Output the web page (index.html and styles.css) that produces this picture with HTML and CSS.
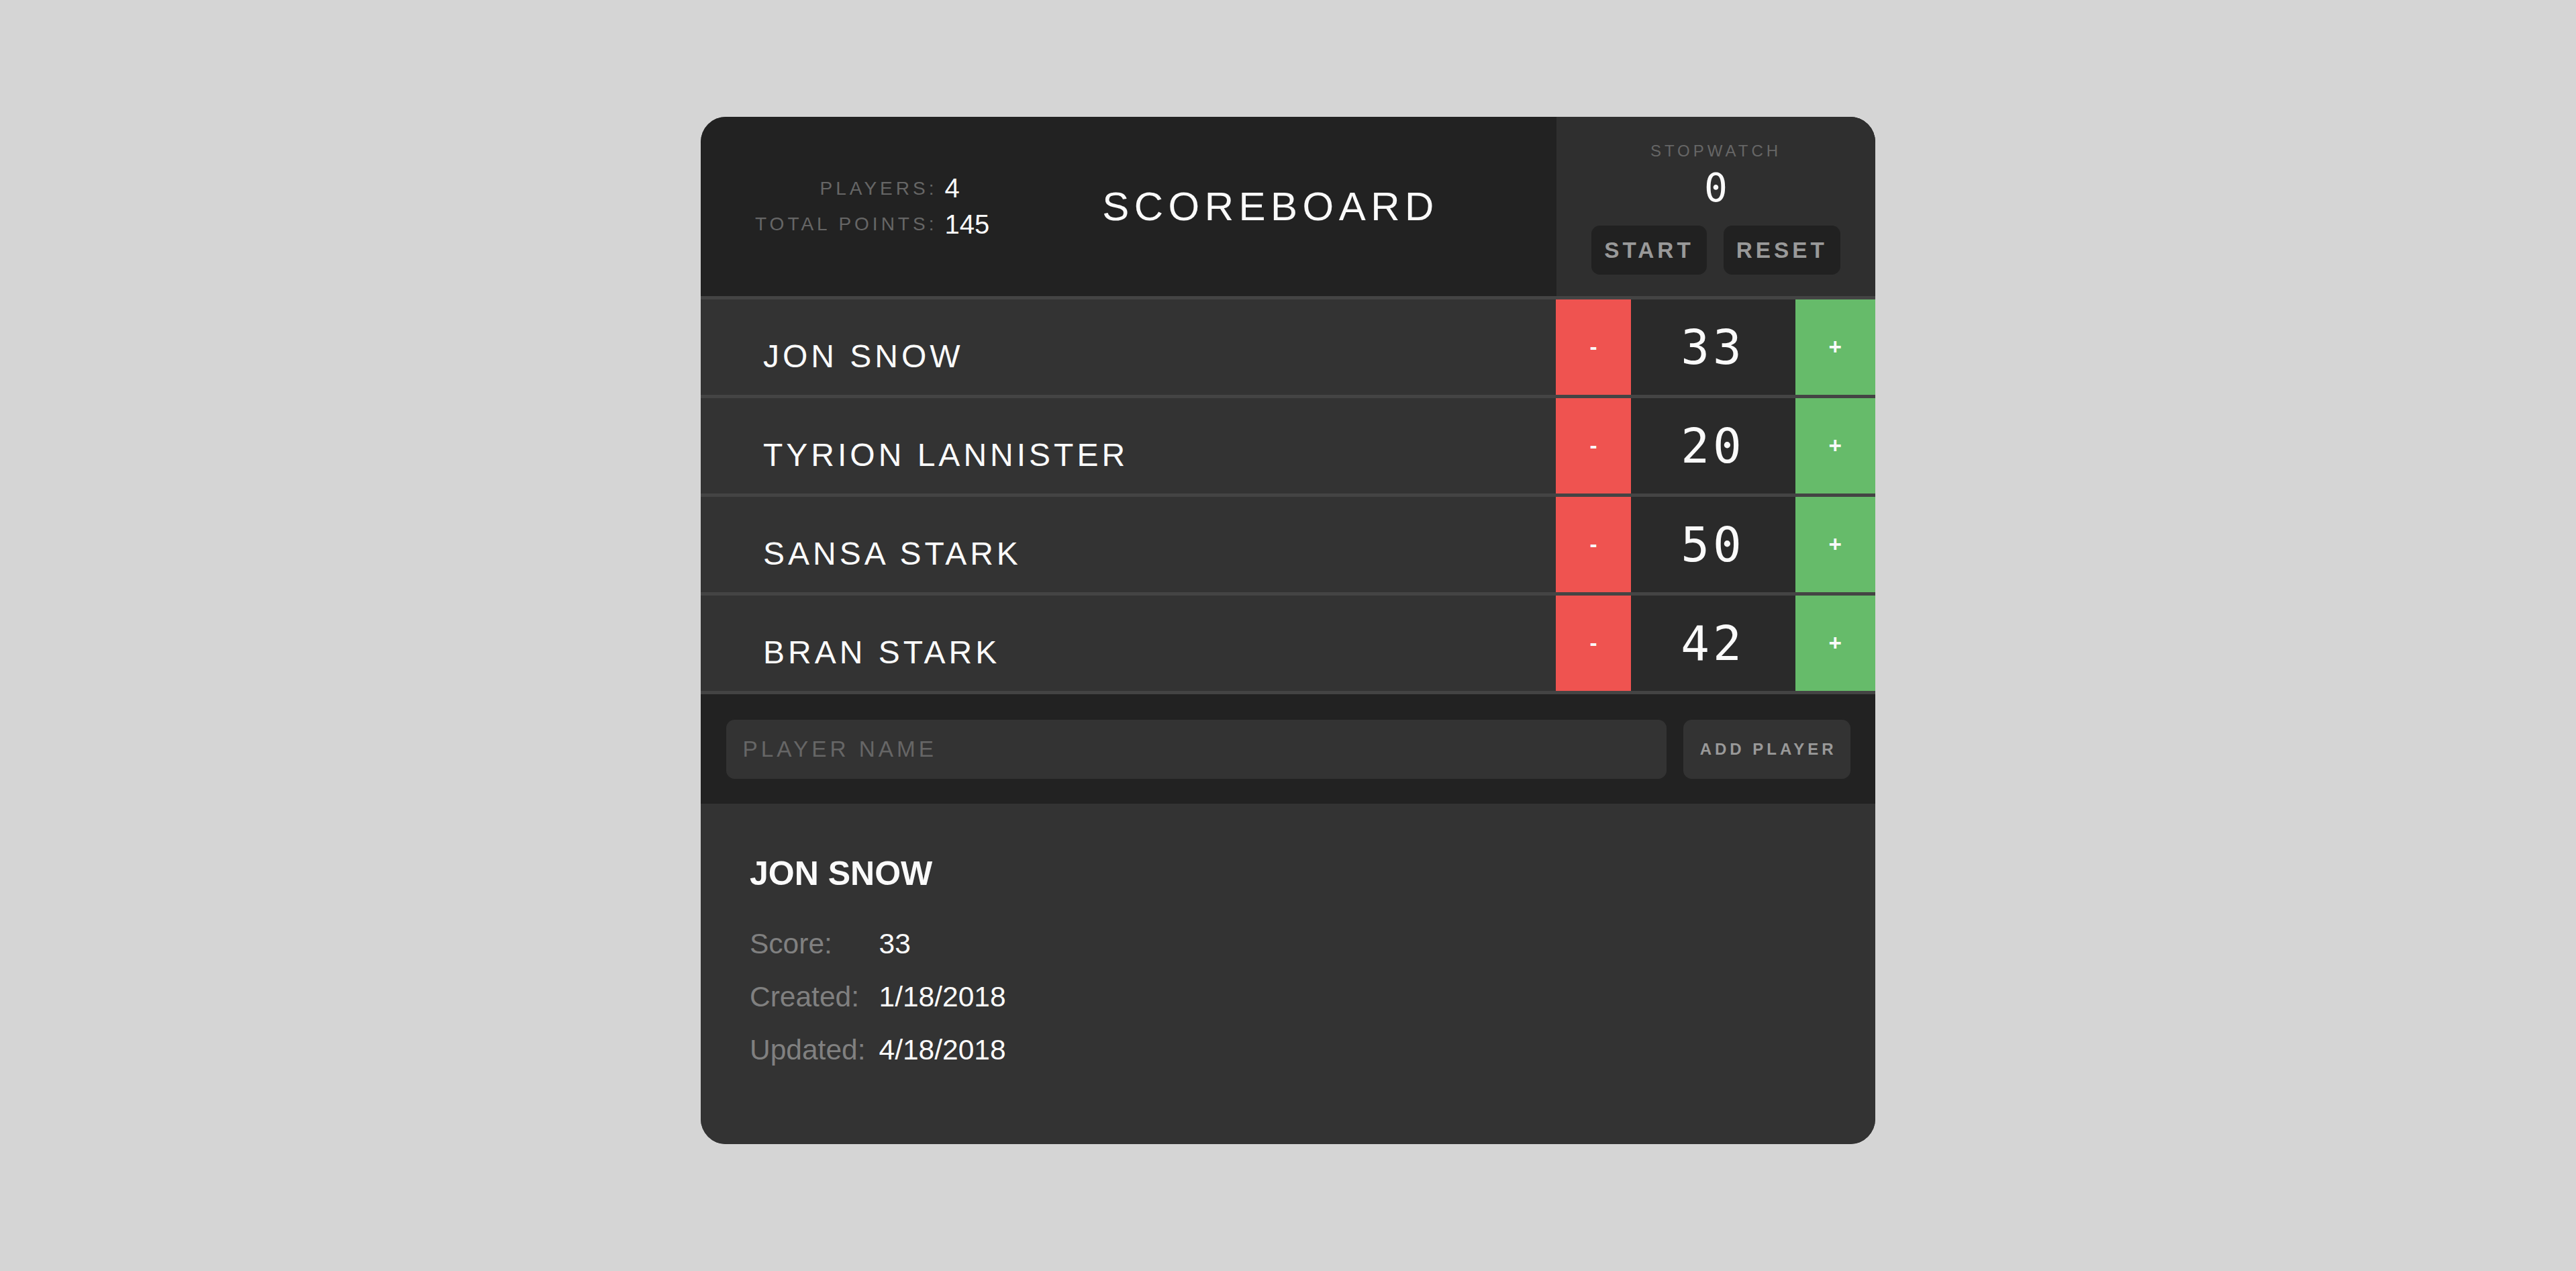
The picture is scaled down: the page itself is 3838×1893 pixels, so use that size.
FILE: index.html
```html
<!DOCTYPE html>
<html lang="en">
<head>
<meta charset="utf-8">
<title>Scoreboard</title>
<link rel="stylesheet" href="styles.css">
</head>
<body>
<div class="scoreboard">
  <header class="header">
    <div class="stats">
      <div class="stats-grid">
        <span class="stat-label">PLAYERS:</span><span class="stat-value">4</span>
        <span class="stat-label">TOTAL POINTS:</span><span class="stat-value">145</span>
      </div>
    </div>
    <h1 class="title">SCOREBOARD</h1>
    <div class="stopwatch">
      <h2 class="stopwatch-label">STOPWATCH</h2>
      <div class="stopwatch-time">0</div>
      <div class="stopwatch-buttons">
        <button class="sw-btn">START</button>
        <button class="sw-btn">RESET</button>
      </div>
    </div>
  </header>

  <div class="players">
    <div class="player">
      <div class="player-name">JON SNOW</div>
      <div class="counter">
        <button class="counter-action decrement">-</button>
        <div class="counter-score">33</div>
        <button class="counter-action increment">+</button>
      </div>
    </div>
    <div class="player">
      <div class="player-name">TYRION LANNISTER</div>
      <div class="counter">
        <button class="counter-action decrement">-</button>
        <div class="counter-score">20</div>
        <button class="counter-action increment">+</button>
      </div>
    </div>
    <div class="player">
      <div class="player-name">SANSA STARK</div>
      <div class="counter">
        <button class="counter-action decrement">-</button>
        <div class="counter-score">50</div>
        <button class="counter-action increment">+</button>
      </div>
    </div>
    <div class="player">
      <div class="player-name">BRAN STARK</div>
      <div class="counter">
        <button class="counter-action decrement">-</button>
        <div class="counter-score">42</div>
        <button class="counter-action increment">+</button>
      </div>
    </div>
  </div>

  <form class="add-player-form">
    <input class="name-input" type="text" placeholder="PLAYER NAME">
    <button type="button" class="add-btn">ADD PLAYER</button>
  </form>

  <section class="player-detail">
    <h3 class="detail-name">JON SNOW</h3>
    <div class="detail-grid">
      <span class="detail-label">Score:</span><span class="detail-value">33</span>
      <span class="detail-label">Created:</span><span class="detail-value">1/18/2018</span>
      <span class="detail-label">Updated:</span><span class="detail-value">4/18/2018</span>
    </div>
  </section>
</div>
</body>
</html>
```

FILE: styles.css
```css
html, body {
  margin: 0;
  padding: 0;
}

body {
  background: #d5d5d5;
  font-family: "Liberation Sans", Arial, sans-serif;
  color: #fafafa;
}

.scoreboard {
  width: 1750px;
  margin: 174px auto 0;
  background: #333;
  border-radius: 37.5px;
  overflow: hidden;
}

/* Header */
.header {
  display: flex;
  background: #222;
  border-bottom: 5px solid #444;
}

.stats {
  width: 427px;
  flex-shrink: 0;
  box-sizing: border-box;
  padding-left: 81px;
  display: flex;
  align-items: center;
}

.stats-grid {
  flex-shrink: 0;
  display: grid;
  grid-template-columns: max-content max-content;
  column-gap: 11px;
  row-gap: 5.4px;
  grid-auto-rows: 48px;
  align-items: center;
  white-space: nowrap;
}

.stat-label {
  justify-self: end;
  font-size: 28px;
  letter-spacing: 5px;
  color: #666;
}

.stat-value {
  font-size: 40px;
  color: #fafafa;
}

.title {
  flex: 1;
  margin: 0;
  align-self: center;
  text-align: center;
  font-size: 60px;
  font-weight: normal;
  letter-spacing: 7.5px;
  color: #fafafa;
  padding: 0 4px 0 0;
  white-space: nowrap;
}

.stopwatch {
  width: 475px;
  flex-shrink: 0;
  box-sizing: border-box;
  background: #2f2f2f;
  padding: 37px 0 32px;
  text-align: center;
}

.stopwatch-label {
  margin: 0;
  font-size: 24px;
  line-height: 28px;
  font-weight: normal;
  letter-spacing: 5px;
  color: #666;
}

.stopwatch-time {
  margin-top: 12px;
  font-family: "DejaVu Sans Mono", "Liberation Mono", monospace;
  font-size: 58px;
  line-height: 58px;
  color: #fafafa;
}

.stopwatch-buttons {
  margin-top: 27px;
  display: flex;
  justify-content: center;
  gap: 25px;
}

.sw-btn {
  height: 73px;
  padding: 0 19px;
  margin: 0;
  border: none;
  border-radius: 12.5px;
  background: #212121;
  color: #999;
  font-family: "Liberation Sans", Arial, sans-serif;
  font-size: 33.3px;
  font-weight: bold;
  letter-spacing: 5px;
}

/* Players */
.player {
  display: flex;
  border-bottom: 5px solid #444;
  height: 142px;
}

.player-name {
  flex: 1;
  padding: 57px 0 0 93px;
  font-size: 48px;
  letter-spacing: 5px;
  line-height: normal;
  color: #fafafa;
}

.counter {
  display: flex;
  flex-shrink: 0;
}

.counter-action {
  border: none;
  margin: 0;
  padding: 0 50px;
  font-family: "Liberation Sans", Arial, sans-serif;
  font-size: 33.3px;
  font-weight: bold;
  color: #fafafa;
}

.decrement {
  background: #ef5350;
}

.increment {
  background: #66bb6a;
}

.counter-score {
  width: 245px;
  box-sizing: border-box;
  background: #2a2a2a;
  display: flex;
  align-items: center;
  justify-content: center;
  font-family: "DejaVu Sans Mono", "Liberation Mono", monospace;
  font-size: 71px;
  letter-spacing: 5px;
  padding-left: 0;
  color: #fafafa;
}

/* Add player form */
.add-player-form {
  display: flex;
  gap: 25px;
  margin: 0;
  padding: 38px 37.5px 37px;
  background: #222;
}

.name-input {
  flex: 1;
  height: 88px;
  box-sizing: border-box;
  margin: 0;
  padding: 0 25px;
  border: none;
  border-radius: 12.5px;
  background: #333;
  color: #999;
  font-family: "Liberation Sans", Arial, sans-serif;
  font-size: 33.3px;
  letter-spacing: 5px;
  outline: none;
}

.name-input::placeholder {
  color: #666;
}

.add-btn {
  height: 88px;
  margin: 0;
  padding: 0 20px 0 25px;
  border: none;
  border-radius: 12.5px;
  background: #333;
  color: #999;
  font-family: "Liberation Sans", Arial, sans-serif;
  font-size: 24px;
  font-weight: bold;
  letter-spacing: 5px;
}

/* Detail */
.player-detail {
  padding: 76px 75px 115px 73px;
  background: #333;
}

.detail-name {
  margin: 0 0 51px;
  font-size: 50px;
  font-weight: bold;
  line-height: 57.5px;
  color: #fafafa;
}

.detail-grid {
  display: grid;
  grid-template-columns: auto 1fr;
  column-gap: 20px;
  row-gap: 30.2px;
  font-size: 42.5px;
  line-height: 48.9px;
}

.detail-label {
  color: #808080;
}

.detail-value {
  color: #fafafa;
}
```
